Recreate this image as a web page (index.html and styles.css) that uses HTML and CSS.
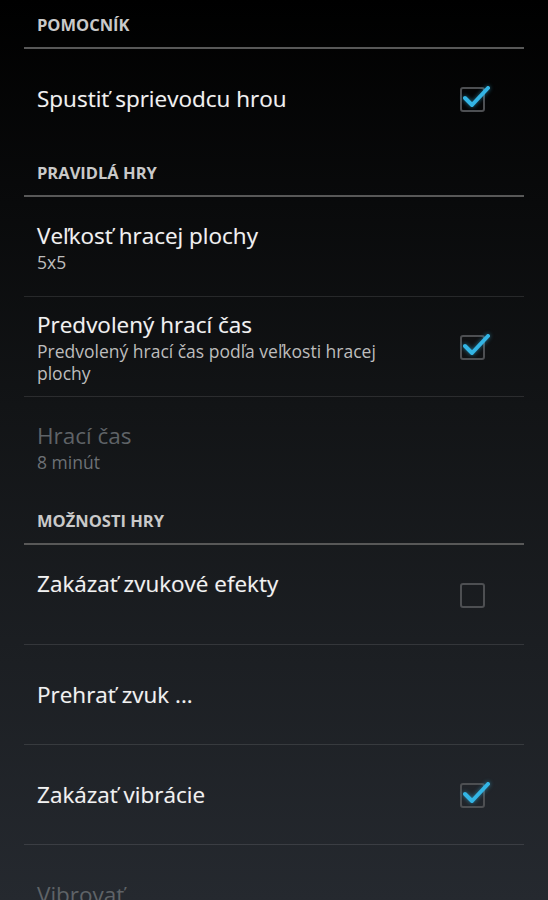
FILE: index.html
```html
<!DOCTYPE html>
<html lang="sk">

<head>
    <meta charset="UTF-8">
    <meta name="viewport" content="width=device-width, initial-scale=1.0">
    <title>Nastavenia</title>
    <link rel="stylesheet" href="styles.css">
</head>

<body>
    <div class="prefs">
        <section class="category">
            <h2 class="category-title">Pomocník</h2>
            <div class="pref">
                <div class="pref-text">
                    <div class="pref-title">Spustiť sprievodcu hrou</div>
                </div>
                <svg class="checkbox" viewBox="0 0 30 28" width="30" height="28">
                    <rect class="box" x="1" y="3" width="23" height="23" rx="2"></rect>
                    <path class="check" d="M5 13 L12 20 L28 3"></path>
                </svg>
            </div>
        </section>

        <section class="category">
            <h2 class="category-title">Pravidlá hry</h2>
            <div class="pref">
                <div class="pref-text">
                    <div class="pref-title">Veľkosť hracej plochy</div>
                    <div class="pref-summary">5x5</div>
                </div>
            </div>
            <div class="pref">
                <div class="pref-text">
                    <div class="pref-title">Predvolený hrací čas</div>
                    <div class="pref-summary">Predvolený hrací čas podľa veľkosti hracej plochy</div>
                </div>
                <svg class="checkbox" viewBox="0 0 30 28" width="30" height="28">
                    <rect class="box" x="1" y="3" width="23" height="23" rx="2"></rect>
                    <path class="check" d="M5 13 L12 20 L28 3"></path>
                </svg>
            </div>
            <div class="pref disabled">
                <div class="pref-text">
                    <div class="pref-title">Hrací čas</div>
                    <div class="pref-summary">8 minút</div>
                </div>
            </div>
        </section>

        <section class="category">
            <h2 class="category-title">Možnosti hry</h2>
            <div class="pref">
                <div class="pref-text">
                    <div class="pref-title">Zakázať zvukové efekty</div>
                    <div class="pref-summary"></div>
                </div>
                <svg class="checkbox" viewBox="0 0 30 28" width="30" height="28">
                    <rect class="box" x="1" y="3" width="23" height="23" rx="2"></rect>
                </svg>
            </div>
            <div class="pref">
                <div class="pref-text">
                    <div class="pref-title">Prehrať zvuk ...</div>
                </div>
            </div>
            <div class="pref">
                <div class="pref-text">
                    <div class="pref-title">Zakázať vibrácie</div>
                </div>
                <svg class="checkbox" viewBox="0 0 30 28" width="30" height="28">
                    <rect class="box" x="1" y="3" width="23" height="23" rx="2"></rect>
                    <path class="check" d="M5 13 L12 20 L28 3"></path>
                </svg>
            </div>
            <div class="pref disabled">
                <div class="pref-text">
                    <div class="pref-title">Vibrovať ...</div>
                </div>
            </div>
        </section>
    </div>
</body>

</html>
```

FILE: styles.css
```css
body {
    font-family: "Open Sans", "DejaVu Sans", sans-serif;
    margin: 0;
    padding: 0;
    height: 100vh;
    overflow: hidden;
    background: linear-gradient(to bottom, #000 0%, #121416 45%, #25292f 100%);
    color: #f2f2f2;
}

.prefs {
    margin: 0 24px;
}

.category-title {
    margin: 0;
    padding: 15px 13px 12px;
    line-height: 20px;
    font-size: 16.5px;
    font-weight: bold;
    text-transform: uppercase;
    color: #c9c9c9;
    border-bottom: 2px solid #585858;
}

.pref {
    display: flex;
    align-items: center;
    min-height: 99px;
    padding: 0 34px 0 13px;
}

.pref + .pref {
    border-top: 1px solid rgba(255, 255, 255, 0.11);
}

.pref-text {
    flex: 1;
    padding-right: 36px;
}

.pref-title {
    font-size: 22.5px;
    line-height: 30px;
    color: #f2f2f2;
    text-shadow: 0 0 1px rgba(255, 255, 255, 0.3);
}

.pref-summary {
    font-size: 17.5px;
    line-height: 22px;
    min-height: 22px;
    color: #bdbdbd;
}

.pref.disabled .pref-title {
    color: #5f6367;
    text-shadow: none;
}

.pref.disabled .pref-summary {
    color: #6d7175;
}

.checkbox {
    flex: none;
    overflow: visible;
}

.checkbox .box {
    fill: none;
    stroke: #4d4f52;
    stroke-width: 2;
}

.checkbox .check {
    fill: none;
    stroke: #33b5e5;
    stroke-width: 4;
    stroke-linecap: round;
    stroke-linejoin: round;
    filter: drop-shadow(0 0 2px rgba(51, 181, 229, 0.6));
}
```
